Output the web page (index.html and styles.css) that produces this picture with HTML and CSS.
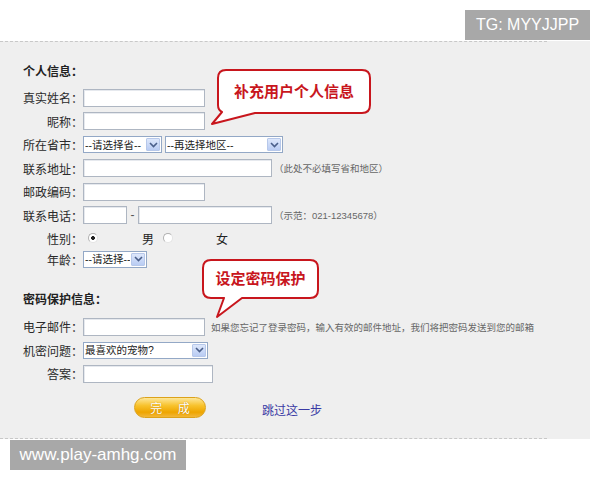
FILE: index.html
```html
<!DOCTYPE html>
<html lang="zh-CN">
<head>
    <meta charset="UTF-8">
    <title>完善个人信息</title>
    <link rel="stylesheet" href="styles.css">
</head>
<body>
    <div class="page">
        <div class="sheet">
            <h3 class="section">个人信息：</h3>

            <div class="row">
                <label>真实姓名：</label>
                <input type="text" class="txt w-mid">
            </div>
            <div class="row">
                <label>昵称：</label>
                <input type="text" class="txt w-mid">
            </div>
            <div class="row">
                <label>所在省市：</label>
                <div class="select w-prov">
                    <select><option>--请选择省--</option></select>
                    <span class="arrow"><svg width="9" height="6" viewBox="0 0 9 6"><path d="M1 1 L4.5 4.5 L8 1" fill="none" stroke="#4a5f8a" stroke-width="1.6"/></svg></span>
                </div>
                <div class="select w-area">
                    <select><option>--再选择地区--</option></select>
                    <span class="arrow"><svg width="9" height="6" viewBox="0 0 9 6"><path d="M1 1 L4.5 4.5 L8 1" fill="none" stroke="#4a5f8a" stroke-width="1.6"/></svg></span>
                </div>
            </div>
            <div class="row">
                <label>联系地址：</label>
                <input type="text" class="txt w-long">
                <span class="hint">（此处不必填写省和地区）</span>
            </div>
            <div class="row">
                <label>邮政编码：</label>
                <input type="text" class="txt w-mid">
            </div>
            <div class="row">
                <label>联系电话：</label>
                <input type="text" class="txt w-code">
                <span class="dash">-</span>
                <input type="text" class="txt w-phone">
                <span class="hint">（示范：021-12345678）</span>
            </div>
            <div class="row row-sex">
                <label>性别：</label>
                <input type="radio" name="sex" class="radio" checked>
                <span class="opt-male">男</span>
                <input type="radio" name="sex" class="radio radio-2">
                <span class="opt-female">女</span>
            </div>
            <div class="row row-age">
                <label>年龄：</label>
                <div class="select w-age">
                    <select><option>--请选择--</option></select>
                    <span class="arrow"><svg width="9" height="6" viewBox="0 0 9 6"><path d="M1 1 L4.5 4.5 L8 1" fill="none" stroke="#4a5f8a" stroke-width="1.6"/></svg></span>
                </div>
            </div>

            <h3 class="section section-2">密码保护信息：</h3>

            <div class="row">
                <label>电子邮件：</label>
                <input type="text" class="txt w-mid">
                <span class="hint hint-mail">如果您忘记了登录密码，输入有效的邮件地址，我们将把密码发送到您的邮箱</span>
            </div>
            <div class="row">
                <label>机密问题：</label>
                <div class="select w-quest">
                    <select><option>最喜欢的宠物?</option></select>
                    <span class="arrow"><svg width="9" height="6" viewBox="0 0 9 6"><path d="M1 1 L4.5 4.5 L8 1" fill="none" stroke="#4a5f8a" stroke-width="1.6"/></svg></span>
                </div>
            </div>
            <div class="row">
                <label>答案：</label>
                <input type="text" class="txt w-answer">
            </div>

            <div class="actions">
                <button type="button" class="btn-done">完 成</button>
                <a href="#" class="skip">跳过这一步</a>
            </div>
        </div>

        <div class="callout callout-info">
            <svg width="168" height="60" viewBox="0 0 168 60">
                <path d="M18 2 H154 Q162 2 162 10 V37 Q162 45 154 45 H47 L4 56 L14 44 Q10 42 10 37 V10 Q10 2 18 2 Z" fill="#fff" stroke="#c8161d" stroke-width="2" stroke-linejoin="round"/>
            </svg>
            <span>补充用户个人信息</span>
        </div>

        <div class="callout callout-pwd">
            <svg width="124" height="62" viewBox="0 0 124 62">
                <path d="M13 2 H112 Q120 2 120 10 V32 Q120 40 112 40 H44 L19 59 L26 40 H13 Q5 40 5 32 V10 Q5 2 13 2 Z" fill="#fff" stroke="#c8161d" stroke-width="2" stroke-linejoin="round"/>
            </svg>
            <span>设定密码保护</span>
        </div>
    </div>

    <div class="mark mark-tg">TG: MYYJJPP</div>
    <div class="mark mark-site">www.play-amhg.com</div>
</body>
</html>
```

FILE: styles.css
```css
body {
    margin: 0;
    background: #fff;
    font-family: "Liberation Sans", "Noto Sans CJK SC", sans-serif;
    font-size: 12px;
    color: #333;
}

.page {
    position: relative;
    width: 590px;
    margin-top: 41px;
    background: #efefef;
}

.sheet {
    width: 547px;
    border-top: 1px dashed #c8c8c8;
    border-bottom: 1px dashed #c8c8c8;
    padding: 21px 0 19.5px 23px;
    box-sizing: border-box;
}

.section {
    margin: 0 0 5px;
    font-size: 12px;
    line-height: 18px;
    font-weight: bold;
    color: #222;
}

.section-2 {
    margin-top: 22px;
    margin-bottom: 6px;
}

.row {
    display: flex;
    align-items: center;
    height: 23.5px;
}

.row label {
    width: 60px;
    flex-shrink: 0;
    text-align: right;
    white-space: nowrap;
    color: #2a2a2a;
}

.row-sex {
    height: 22px;
}

.row-age {
    height: 20px;
}

.txt {
    box-sizing: border-box;
    height: 18px;
    margin: 0;
    padding: 0 2px;
    border: 1px solid #aeb6c2;
    background: #fff;
    box-shadow: inset 1px 1px 0 #e6e9ee;
    outline: none;
}

.w-mid { width: 122px; }
.w-long { width: 189px; }
.w-code { width: 44px; }
.w-phone { width: 134px; }
.w-answer { width: 130px; }

.dash {
    width: 11px;
    text-align: center;
    color: #555;
}

.hint {
    margin-left: 2px;
    font-size: 9.5px;
    color: #666;
    white-space: nowrap;
}

.hint-mail {
    margin-left: 6px;
}

.select {
    box-sizing: border-box;
    display: flex;
    align-items: stretch;
    height: 17px;
    border: 1px solid #93a8c6;
    background: #fff;
}

.select select {
    flex: 1;
    min-width: 0;
    -webkit-appearance: none;
    appearance: none;
    border: none;
    background: transparent;
    padding: 0 0 0 1px;
    margin: 0;
    font-family: "Liberation Sans", "Noto Sans CJK SC", sans-serif;
    font-size: 10.5px;
    color: #222;
    outline: none;
}

.select .arrow {
    width: 14px;
    margin: 1px;
    display: flex;
    align-items: center;
    justify-content: center;
    border: 1px solid #b7c8ea;
    border-radius: 1px;
    background: linear-gradient(#dde7fb, #b9ccf3);
    box-sizing: border-box;
}

.w-prov { width: 79px; }
.w-area { width: 118px; margin-left: 3px; }
.w-age { width: 64px; }
.w-quest { width: 125px; }

.radio {
    -webkit-appearance: none;
    appearance: none;
    box-sizing: border-box;
    width: 10px;
    height: 10px;
    margin: 0 0 0 5px;
    border: 1px solid #b0b0b0;
    border-right-color: #e4e4e4;
    border-bottom-color: #e4e4e4;
    border-radius: 50%;
    background: #fff;
}

.radio:checked {
    background: radial-gradient(circle, #222 0 1.6px, #fff 2.2px);
}

.radio-2 {
    margin-left: 9px;
}

.opt-male {
    margin-left: 44px;
    color: #222;
}

.opt-female {
    margin-left: 43px;
    color: #222;
}

.actions {
    display: flex;
    align-items: center;
    height: 22px;
    margin-top: 11px;
    padding-left: 111px;
}

.btn-done {
    width: 72px;
    height: 21px;
    padding: 0;
    border: 1px solid #dca21a;
    border-radius: 11px;
    background: linear-gradient(#fde79a 0%, #f8c22c 40%, #eea500 75%, #f2b73a 100%);
    color: #fff;
    font-family: "Liberation Sans", "Noto Sans CJK SC", sans-serif;
    font-size: 12px;
    letter-spacing: 6px;
    text-indent: 6px;
    text-shadow: 0 0 1px #b77900;
    cursor: pointer;
}

.skip {
    margin-left: 56px;
    padding-top: 4px;
    color: #3a3aa4;
    text-decoration: none;
    font-size: 12px;
}

.callout {
    position: absolute;
}

.callout svg {
    display: block;
}

.callout span {
    position: absolute;
    text-align: center;
    font-size: 15px;
    font-weight: bold;
    color: #c8161d;
    white-space: nowrap;
}

.callout-info {
    left: 208px;
    top: 27px;
}

.callout-info span {
    left: 10px;
    top: 2px;
    width: 152px;
    line-height: 43px;
}

.callout-pwd {
    left: 198px;
    top: 217px;
}

.callout-pwd span {
    left: 5px;
    top: 2px;
    width: 115px;
    line-height: 38px;
}

.mark {
    position: absolute;
    background: #a8a8a8;
    color: #fff;
    font-family: "Liberation Sans", sans-serif;
    line-height: 30px;
    text-align: center;
}

.mark-tg {
    left: 465px;
    top: 10px;
    width: 125px;
    font-size: 16px;
}

.mark-site {
    left: 10px;
    top: 440px;
    width: 176px;
    font-size: 17px;
}
```
